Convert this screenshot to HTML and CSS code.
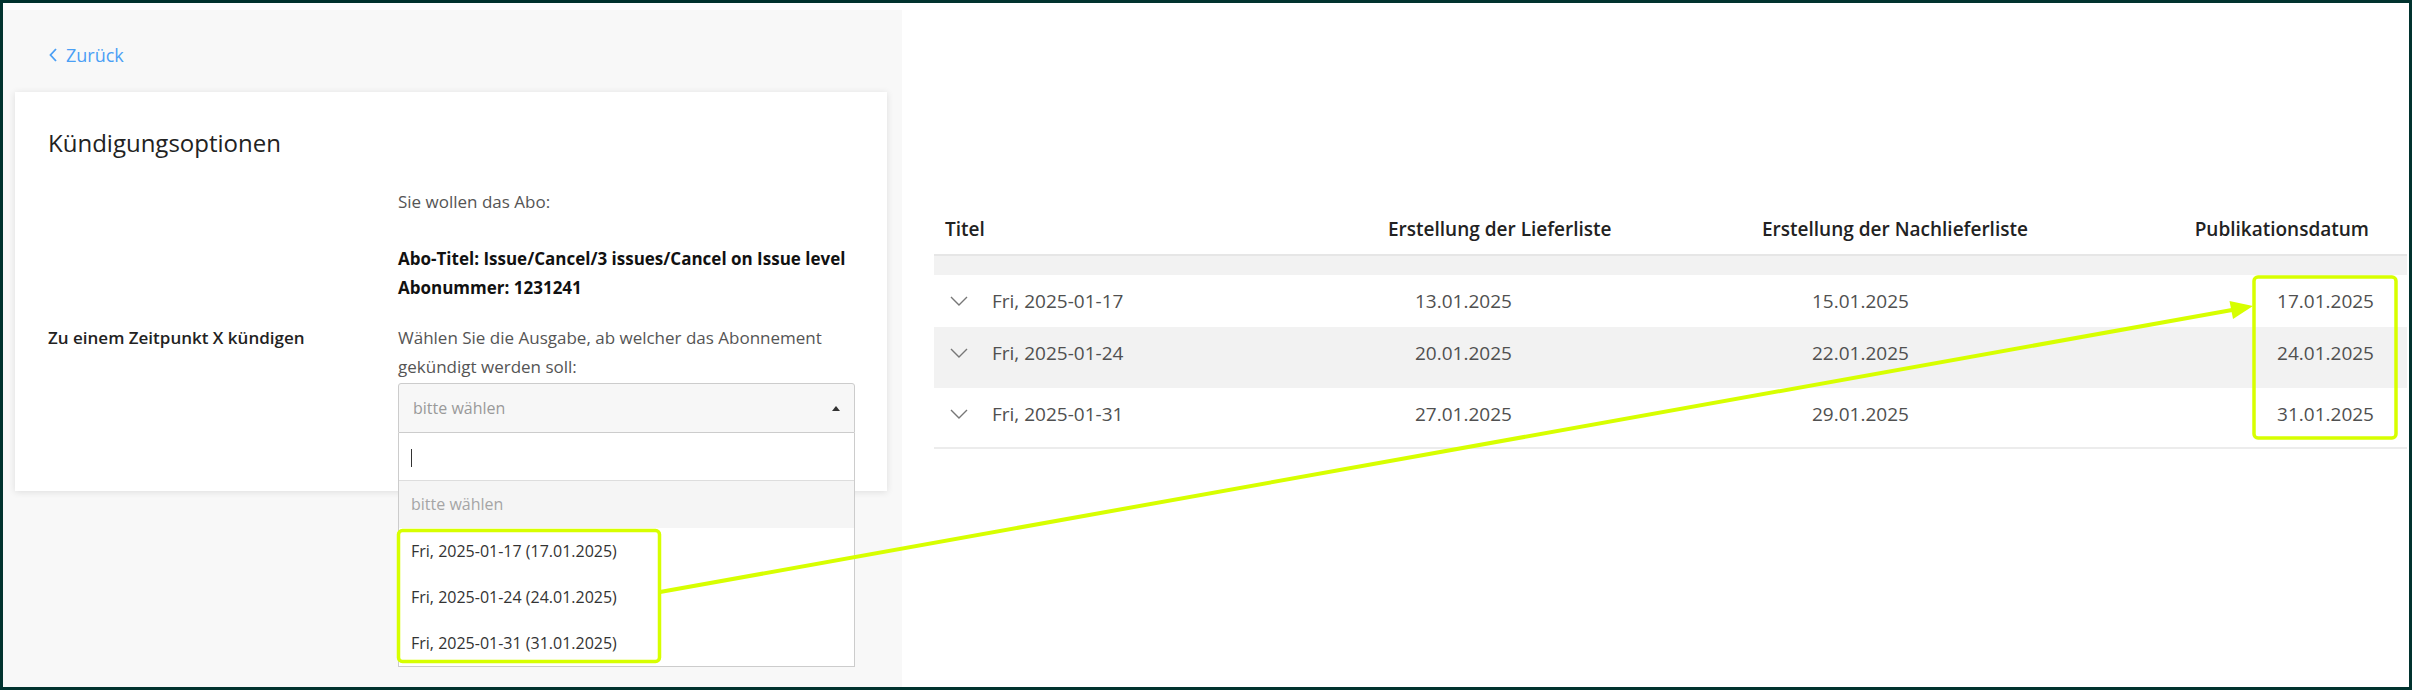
FILE: index.html
```html
<!DOCTYPE html>
<html lang="de">
<head>
    <meta charset="UTF-8">
    <title>Kündigungsoptionen</title>
    <link rel="stylesheet" href="styles.css">
</head>
<body>
    <div class="frame">
        <aside class="panel">
            <a class="back" href="#">
                <svg width="10" height="16" viewBox="0 0 10 16"><path d="M8 2 L2.5 8 L8 14" fill="none" stroke="#4a9ff5" stroke-width="1.8"/></svg>
                Zurück
            </a>
            <section class="card">
                <h2>Kündigungsoptionen</h2>
                <div class="form-grid">
                    <div></div>
                    <div class="hint">Sie wollen das Abo:</div>
                    <div></div>
                    <div class="sub-info">
                        <strong>Abo-Titel: Issue/Cancel/3 issues/Cancel on Issue level</strong>
                        <strong>Abonummer: 1231241</strong>
                    </div>
                    <div class="label">Zu einem Zeitpunkt X kündigen</div>
                    <div>
                        <p class="hint">Wählen Sie die Ausgabe, ab welcher das Abonnement gekündigt werden soll:</p>
                        <div class="select">
                            <div class="select-box">
                                <span>bitte wählen</span>
                                <i class="caret"></i>
                            </div>
                            <div class="dropdown">
                                <div class="search"><span class="cursor"></span></div>
                                <div class="option placeholder">bitte wählen</div>
                                <div class="option">Fri, 2025-01-17 (17.01.2025)</div>
                                <div class="option">Fri, 2025-01-24 (24.01.2025)</div>
                                <div class="option">Fri, 2025-01-31 (31.01.2025)</div>
                            </div>
                        </div>
                    </div>
                </div>
            </section>
        </aside>

        <main class="issues">
            <div class="table">
                <div class="thead">
                    <div class="c1">Titel</div>
                    <div class="c2">Erstellung der Lieferliste</div>
                    <div class="c3">Erstellung der Nachlieferliste</div>
                    <div class="c4">Publikationsdatum</div>
                </div>
                <div class="spacer"></div>
                <div class="row first">
                    <div class="c1"><svg class="chev" width="18" height="10" viewBox="0 0 18 10"><path d="M1 1 L9 9 L17 1" fill="none" stroke="#777" stroke-width="1.4"/></svg>Fri, 2025-01-17</div>
                    <div class="c2">13.01.2025</div>
                    <div class="c3">15.01.2025</div>
                    <div class="c4">17.01.2025</div>
                </div>
                <div class="row alt">
                    <div class="c1"><svg class="chev" width="18" height="10" viewBox="0 0 18 10"><path d="M1 1 L9 9 L17 1" fill="none" stroke="#777" stroke-width="1.4"/></svg>Fri, 2025-01-24</div>
                    <div class="c2">20.01.2025</div>
                    <div class="c3">22.01.2025</div>
                    <div class="c4">24.01.2025</div>
                </div>
                <div class="row last">
                    <div class="c1"><svg class="chev" width="18" height="10" viewBox="0 0 18 10"><path d="M1 1 L9 9 L17 1" fill="none" stroke="#777" stroke-width="1.4"/></svg>Fri, 2025-01-31</div>
                    <div class="c2">27.01.2025</div>
                    <div class="c3">29.01.2025</div>
                    <div class="c4">31.01.2025</div>
                </div>
            </div>
        </main>
    </div>

    <!-- annotation: highlight boxes and arrow -->
    <svg class="marks" width="2412" height="690" viewBox="0 0 2412 690">
        <rect x="398.5" y="530.5" width="261" height="131" rx="4" fill="none" stroke="#d7ff00" stroke-width="3.5"/>
        <rect x="2254" y="277" width="142" height="161" rx="4" fill="none" stroke="#d7ff00" stroke-width="3.5"/>
        <line x1="660" y1="592" x2="2232" y2="310" stroke="#d7ff00" stroke-width="4"/>
        <polygon points="2253,306 2233,319 2229.5,301" fill="#d7ff00"/>
    </svg>
</body>
</html>
```

FILE: styles.css
```css
* { margin: 0; padding: 0; box-sizing: border-box; }
body { background: #01332f; padding: 3px; height: 690px; font-family: 'Open Sans', sans-serif; position: relative; }
.frame { background: white; height: 684px; padding-top: 7px; display: flex; }

.panel { width: 899px; background: #f8f8f8; padding: 34px 0 0 45px; }
.back { display: flex; align-items: center; gap: 8px; height: 22px; font-size: 18px; color: #4a9ff5; text-decoration: none; }
.card { margin: 26px 0 0 -33px; width: 872px; height: 399px; background: white; box-shadow: 0 1px 7px rgba(0, 0, 0, 0.11); padding: 36px 33px 0; }
.card h2 { font-size: 24px; font-weight: 400; line-height: 30px; color: #222; }
.form-grid { display: grid; grid-template-columns: 350px 457px; margin-top: 29px; line-height: 29px; font-size: 17px; }
.hint { color: #555; }
.sub-info { display: flex; flex-direction: column; margin: 28px 0 21px; color: #111; }
.sub-info strong { font-weight: 700; }
.label { color: #222; font-weight: 600; }

.select { position: relative; margin-top: 2px; }
.select-box { height: 50px; background: #f7f7f7; border: 1px solid #ccc; border-radius: 3px 3px 0 0; display: flex; align-items: center; justify-content: space-between; padding: 0 14px; color: #9a9a9a; font-size: 16px; }
.caret { border-left: 4px solid transparent; border-right: 4px solid transparent; border-bottom: 5px solid #333; }
.dropdown { position: absolute; top: 50px; left: 0; right: 0; background: white; border: 1px solid #ccc; border-top: none; font-size: 16px; }
.search { height: 48px; border-bottom: 1px solid #ddd; padding: 16px 12px; }
.cursor { display: block; width: 1px; height: 18px; background: #333; }
.option { height: 46px; display: flex; align-items: center; padding-left: 12px; color: #333; }
.option.placeholder { height: 47px; background: #f5f5f5; color: #a5a5a5; }

.issues { flex: 1; padding: 196px 2px 0 32px; }
.thead, .row { display: grid; grid-template-columns: 446px 370px 440px 1fr; }
.thead { height: 50px; align-items: center; border-bottom: 2px solid #e6e6e6; font-weight: 600; font-size: 19px; color: #222; padding-bottom: 2px; }
.spacer { height: 19px; background: #f2f2f2; }
.row { height: 61px; padding-top: 13px; align-items: start; font-size: 19px; color: #505050; line-height: 26px; }
.row.first { height: 52px; }
.row.alt { background: #f2f2f2; }
.row.last { border-bottom: 2px solid #ececec; }
.thead .c1 { padding-left: 11px; }
.thead .c2 { padding-left: 8px; }
.thead .c3 { padding-left: 12px; }
.thead .c4 { text-align: right; padding-right: 38px; }
.row .c1 { display: flex; align-items: center; padding-left: 16px; gap: 24px; }
.row .c2 { padding-left: 35px; }
.row .c3 { padding-left: 62px; }
.row .c4 { text-align: right; padding-right: 33px; }

.marks { position: absolute; top: 0; left: 0; pointer-events: none; }
```
